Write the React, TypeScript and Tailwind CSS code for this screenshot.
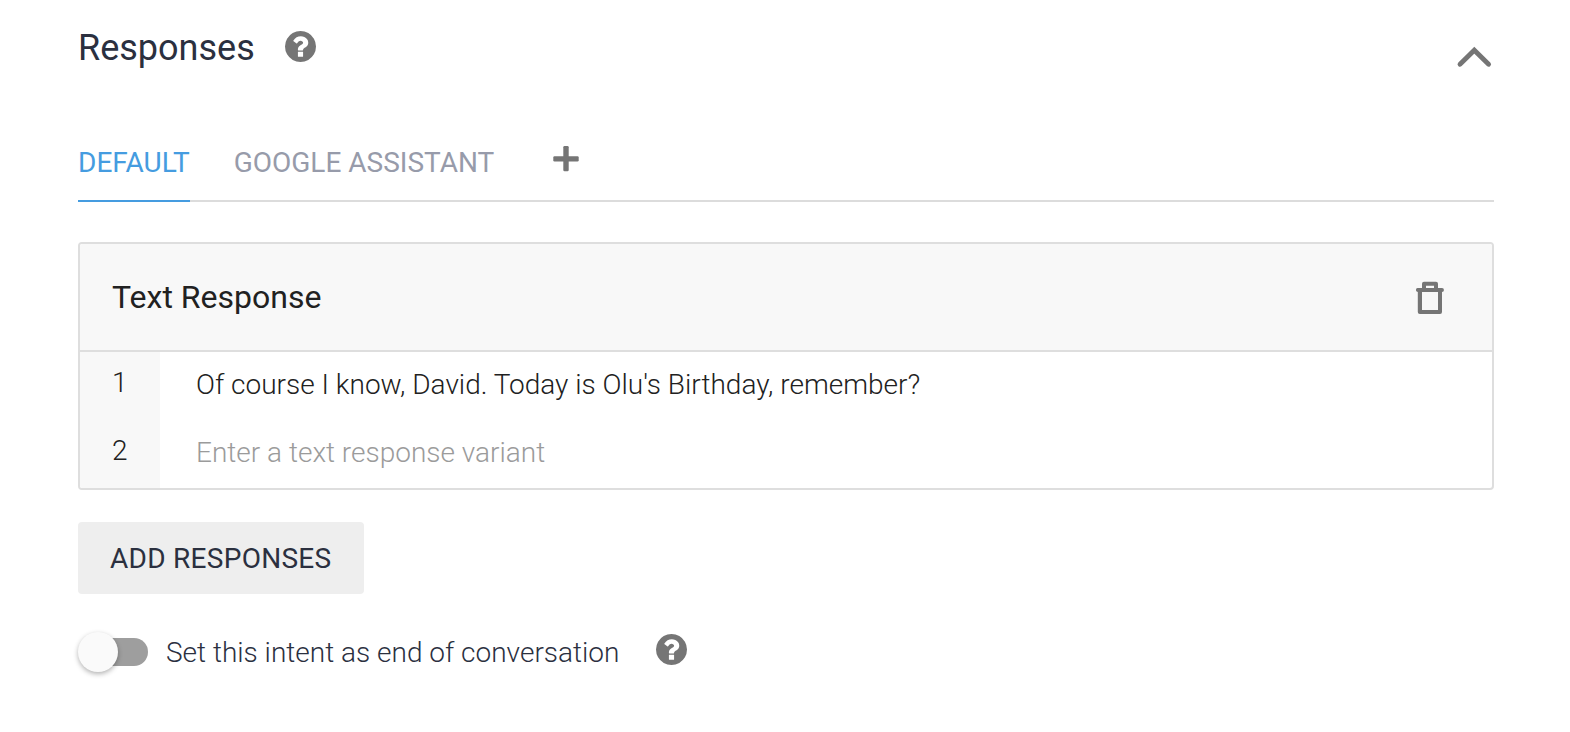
import React, { useState } from "react";

function HelpIcon() {
  return (
    <svg width="31" height="31" viewBox="128 128 1536 1536" fill="#757575" className="block shrink-0">
      <path d="M1024 1376v-192q0-14-9-23t-23-9h-192q-14 0-23 9t-9 23v192q0 14 9 23t23 9h192q14 0 23-9t9-23zm256-672q0-88-55.500-163t-138.500-116-170-41q-243 0-371 213-15 24 8 42l132 100q7 6 19 6 16 0 25-12 53-68 86-92 34-24 86-24 48 0 85.500 26t37.500 59q0 38-20 61t-68 45q-63 28-115.500 86.500t-52.500 125.500v36q0 14 9 23t23 9h192q14 0 23-9t9-23q0-19 21.500-49.500t54.500-49.500q32-18 49-28.500t46-35 44.500-48 28-60.500 12.500-81zm384 192q0 209-103 385.500t-279.500 279.500-385.500 103-385.500-103-279.500-279.500-103-385.500 103-385.500 279.500-279.500 385.500-103 385.500 103 279.500 279.500 103 385.500z" />
    </svg>
  );
}

function ChevronUpIcon() {
  return (
    <svg width="36" height="22" viewBox="0 0 36 22" fill="none" stroke="#757575" strokeWidth="4.800" strokeLinecap="round" className="block">
      <path d="M4 18.200 18.300 4.200 32.600 18.200" />
    </svg>
  );
}

function PlusIcon() {
  return (
    <svg width="26" height="26" viewBox="0 0 26 26" fill="#757575" className="block">
      <rect x="0.300" y="10.200" width="25.400" height="5.200" rx="1.200" />
      <rect x="10.300" y="0" width="5.400" height="25.300" rx="1.200" />
    </svg>
  );
}

function TrashIcon() {
  return (
    <svg width="28" height="33" viewBox="0 0 28 33" fill="#757575" className="block">
      <path fillRule="evenodd" d="M8 .7h12a2 2 0 0 1 2 2V7h4a1.900 1.900 0 0 1 0 3.900V31a2 2 0 0 1-2 2H3.800a2 2 0 0 1-2-2V10.900A1.900 1.900 0 0 1 2 7h4V2.700a2 2 0 0 1 2-2zm2 4V7h8V4.700zM6 10.900V29h16V10.900z" />
    </svg>
  );
}

export default function App() {
  const [endOfConversation, setEndOfConversation] = useState(false);

  return (
    <main className="h-[732px] bg-white pt-[21px] pr-[76px] pl-[78px] font-['Roboto',sans-serif] text-[#2b303f]">
      <header className="flex h-[54px] justify-between">
        <div className="flex h-[54px] items-center">
          <h2 className="text-[36px] leading-[54px]">Responses</h2>
          <div className="mb-[3px] ml-[30px]">
            <HelpIcon />
          </div>
        </div>
        <button aria-label="Collapse" className="mt-[25px] mr-[2px] self-start">
          <ChevronUpIcon />
        </button>
      </header>

      <nav className="mt-[47px] flex h-[80px] border-b-2 border-[#dcdcdc] text-[28px]">
        <button className="h-[80px] border-b-2 border-[#459ce0] pt-[2px] leading-[78px] text-[#459ce0]">DEFAULT</button>
        <button className="ml-[44px] h-[80px] border-b-2 border-transparent pt-[2px] leading-[78px] text-[#979baa]">
          GOOGLE ASSISTANT
        </button>
        <button aria-label="Add platform" className="mt-[24px] ml-[59px] self-start">
          <PlusIcon />
        </button>
      </nav>

      <section className="mt-[40px] h-[248px] overflow-hidden rounded border-2 border-[#dedede] text-[#212121]">
        <div className="flex h-[108px] items-center justify-between border-b-2 border-[#dedede] bg-[#f8f8f8] pr-[48px] pl-8">
          <h3 className="text-[32px] leading-[48px]">Text Response</h3>
          <button aria-label="Delete response">
            <TrashIcon />
          </button>
        </div>
        <div className="flex h-[68px] text-[28px] font-light">
          <div className="w-[80px] bg-[#f8f8f8] pl-8 leading-[62px]">1</div>
          <div className="pl-9 leading-[66px]">Of course I know, David. Today is Olu's Birthday, remember?</div>
        </div>
        <div className="flex h-[68px] text-[28px] font-light">
          <div className="w-[80px] bg-[#f8f8f8] pl-8 leading-[62px]">2</div>
          <div className="pl-9 leading-[66px] text-[#9b9b9b]">Enter a text response variant</div>
        </div>
      </section>

      <button className="mt-8 block h-[72px] w-[286px] rounded bg-[#eee] pt-[2px] pl-8 text-left text-[28px] tracking-[0.28px]">
        ADD RESPONSES
      </button>

      <div className="mt-[38px] flex h-[40px] items-center">
        <button
          role="switch"
          aria-checked={endOfConversation}
          aria-label="End of conversation"
          onClick={() => setEndOfConversation(!endOfConversation)}
          className="flex h-[40px] w-[70px] items-center"
        >
          <span className="ml-[2px] flex h-[28px] w-[68px] items-center rounded-full bg-[#9e9e9e]">
            <span
              className={
                endOfConversation
                  ? "ml-[28px] block size-[40px] shrink-0 rounded-full bg-[#fafafa] shadow-[0_2px_5px_rgba(0,0,0,0.3)]"
                  : "-ml-[2px] block size-[40px] shrink-0 rounded-full bg-[#fafafa] shadow-[0_2px_5px_rgba(0,0,0,0.3)]"
              }
            />
          </span>
        </button>
        <span className="ml-[18px] pt-[2px] text-[28px] leading-[42px] font-light">Set this intent as end of conversation</span>
        <div className="mb-[6px] ml-[37px]">
          <HelpIcon />
        </div>
      </div>
    </main>
  );
}
